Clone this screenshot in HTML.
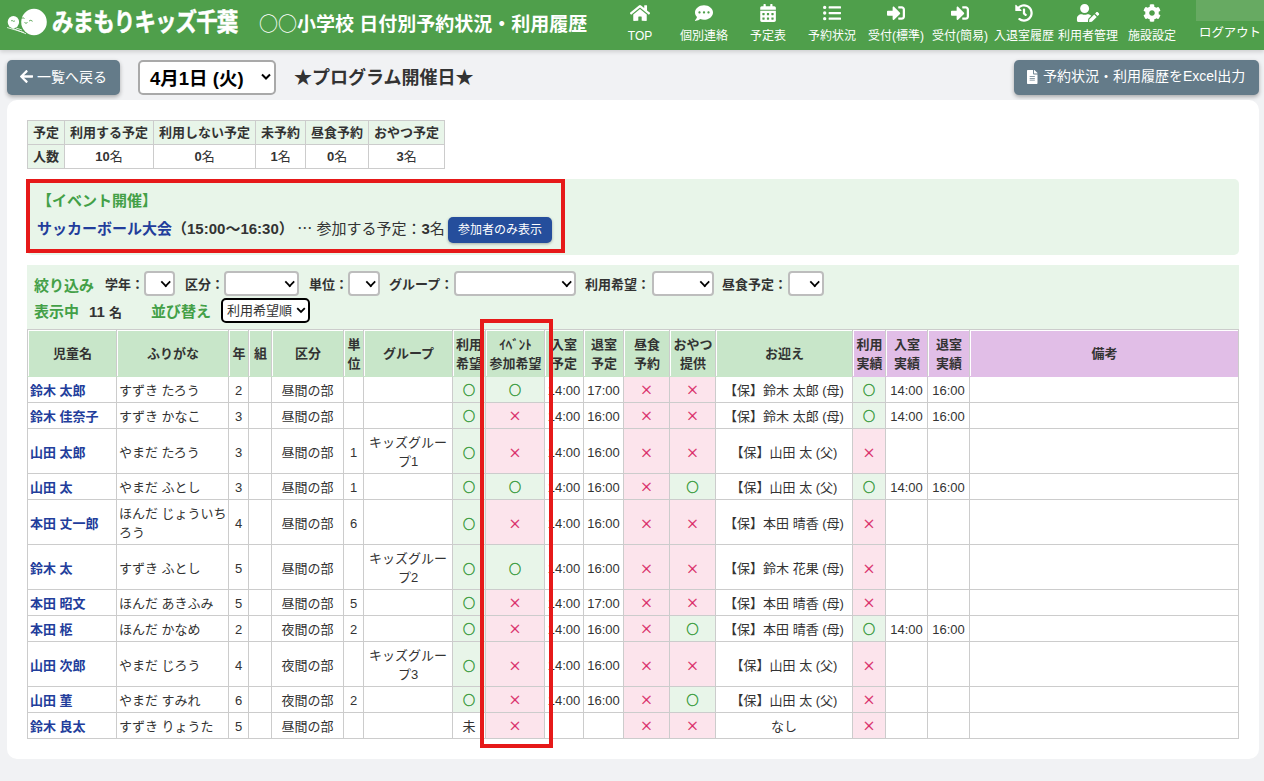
<!DOCTYPE html>
<html lang="ja">
<head>
<meta charset="utf-8">
<title>日付別予約状況・利用履歴</title>
<style>
*{box-sizing:border-box}
html,body{margin:0;padding:0}
body{width:1264px;height:781px;overflow:hidden;position:relative;background:#f1f2f4;color:#333;
  font-family:"Liberation Sans","Noto Sans CJK JP",sans-serif;font-size:13px;line-height:1.5}
a{text-decoration:none;color:inherit}
#hdr{position:absolute;left:0;top:0;width:1264px;height:50px;background:#4f9f4b;color:#fff;box-shadow:0 2px 4px rgba(0,0,0,.14)}
#logo{position:absolute;left:0;top:0}
#brand{position:absolute;left:52px;top:5px;font-size:21.5px;font-weight:700;line-height:36px;letter-spacing:-.9px;white-space:nowrap;-webkit-text-stroke:.4px #fff;transform:scaleY(1.18);transform-origin:50% 50%}
#ptitle{position:absolute;left:259px;top:8px;font-size:19px;font-weight:700;line-height:30px;white-space:nowrap}
#ptitle .thin{font-weight:400;font-family:"Noto Sans CJK JP","Liberation Sans",sans-serif}
.nv{position:absolute;top:0;width:80px;height:50px;text-align:center;color:#fff}
.nv svg{position:absolute;top:4px;left:50%;transform:translateX(-50%)}
.nv span{position:absolute;top:27px;left:-10px;right:-10px;font-size:12px;line-height:18px;white-space:nowrap}
#ubox{position:absolute;left:1196px;top:0;width:68px;height:21px;background:#67aa62}
#logout{position:absolute;left:1197px;width:66px;top:24px;text-align:center;font-size:12.4px;line-height:18px;white-space:nowrap}

#back{position:absolute;left:7px;top:60px;width:113px;height:35px;background:#647b89;color:#fff;border-radius:5px;box-shadow:0 2px 4px rgba(0,0,0,.3);font-size:14px;line-height:35px;white-space:nowrap}
#back svg{position:absolute;left:13px;top:9px}
#back span{position:absolute;left:30px;top:0}
#datesel{position:absolute;left:138px;top:60px;width:138px;height:35px;background:#fff;border:2px solid #a9a9a9;border-radius:5px;font-size:18.5px;font-weight:700;color:#000;line-height:31px;white-space:nowrap}
#datesel span{position:absolute;left:10px;top:1px}
#datesel svg{position:absolute;right:2px;top:11px}
#daytitle{position:absolute;left:294px;top:63px;font-size:18px;font-weight:700;line-height:30px;white-space:nowrap;color:#333}
#excel{position:absolute;left:1014px;top:60px;width:245px;height:35px;background:#647b89;color:#fff;border-radius:5px;box-shadow:0 2px 4px rgba(0,0,0,.3);font-size:14px;line-height:35px;white-space:nowrap}
#excel svg{position:absolute;left:13px;top:10px}
#excel span{position:absolute;left:29px;top:-1px}

#card{position:absolute;left:7px;top:100px;width:1252px;height:659px;background:#fff;border-radius:10px}

#sum{position:absolute;left:27px;top:120px;border-collapse:separate;border-spacing:0;border-right:1px solid #ccc;border-bottom:1px solid #ccc;font-size:13px}
#sum th,#sum td{border-left:1px solid #ccc;border-top:1px solid #ccc;height:24px;padding:0 5px;text-align:center;line-height:22px;white-space:nowrap}
#sum th{background:#e8f5e9;font-weight:700}
#sum td{background:#fff}

#evpanel{position:absolute;left:27px;top:179px;width:1212px;height:76px;background:#e8f5e9;border-radius:5px}
#evh{position:absolute;left:10px;top:11px;font-size:15px;font-weight:700;color:#43a047;line-height:22px;white-space:nowrap}
#evl{position:absolute;left:10px;top:38px;font-size:15px;line-height:22px;white-space:nowrap;color:#333}
#evl .evn{color:#223d9b;font-weight:700}
#evbtn{position:absolute;left:421px;top:38px;width:104px;height:26px;background:#254e9c;border-radius:5px;color:#fff;font-size:12px;line-height:27px;text-align:center;box-shadow:0 1px 3px rgba(0,0,0,.3)}

#fpanel{position:absolute;left:27px;top:265px;width:1212px;height:80px;background:#e8f5e9}
#frow1,#frow2{position:absolute;left:0;width:100%}
#frow1{top:7px;height:24px}
#frow2{top:33px;height:24px}
.gl{position:absolute;left:7px;top:2px;font-size:15px;font-weight:700;color:#43a047;line-height:24px;white-space:nowrap}
#frow1 label{position:absolute;top:1px;margin-left:-1px;font-size:13px;font-weight:700;line-height:24px;white-space:nowrap}
.sel{position:absolute;top:-1px;height:25px;background:#fff;border:2px solid #bdbdbd;border-radius:4px}
.sel:after{content:"";position:absolute;right:3.5px;top:4.5px;width:5.5px;height:5.5px;border-right:2px solid #000;border-bottom:2px solid #000;transform:rotate(45deg) scale(.9)}
#cnt{position:absolute;left:62px;top:2px;font-size:15px;font-weight:700;line-height:24px;white-space:nowrap}
#sortsel{position:absolute;left:194px;top:0;width:89px;height:25px;background:#fff;border:2px solid #000;border-radius:5px;font-size:13px;line-height:21px;white-space:nowrap}
#sortsel span{position:absolute;left:4px;top:0}
#sortsel svg{position:absolute;right:2px;top:7px}

#main{position:absolute;left:27px;top:329px;width:1212px;table-layout:fixed;border-collapse:separate;border-spacing:0;border-right:1px solid #ccc;border-bottom:1px solid #ccc;font-size:13px;line-height:19.5px}
#main th,#main td{border-left:1px solid #ccc;border-top:1px solid #ccc;padding:0 2px;text-align:center;vertical-align:middle;overflow:hidden}
#main th{height:47px;background:#c8e6c9;font-weight:700;box-shadow:inset 1px 1px 0 #fff;padding:2px 0 0 1px}
#main th.z{background:#e1bee7}
#main td{background:#fff;padding-top:2px}
#main td.t{padding-top:4px}
#main td.l{text-align:left;padding-left:2px;padding-right:0}
#main td.nm{color:#223d9b;font-weight:700}
#main td.g{background:#e8f5e9;color:#43a047}
#main td.p{background:#fce4ec;color:#d81b60}
#main tr.r1 td{border-top-color:#c8e6c9}
#main tr.r1 td.z{border-top-color:#e1bee7}
.sy{font-family:"Noto Sans CJK JP","Liberation Sans",sans-serif;font-weight:400}
#main td.g .sy{-webkit-text-stroke:.55px #43a047;font-size:12px}
#main td.p .sy{-webkit-text-stroke:.25px #d81b60;position:relative;top:-1px}
#main .clipa,#main .clipb{padding-left:0;padding-right:0;white-space:nowrap}

.redbox{position:absolute;border:4px solid #e61919;box-sizing:content-box}

.cj{font-family:"Noto Sans CJK JP","Liberation Sans",sans-serif}
#cnt i{font-style:normal;font-size:13px}

</style>
</head>
<body>
<div id="hdr">
  <svg id="logo" width="50" height="50" viewBox="0 0 50 50">
    <ellipse cx="34" cy="22" rx="12.8" ry="13.2" fill="#fff"/>
    <ellipse cx="13.4" cy="22.1" rx="5.7" ry="6.1" fill="#fff"/>
    <path d="M7 27.5 L24 32.5 M12 28 L26 33.8 M16 28 L22 30" stroke="#fff" stroke-width="0.8" fill="none"/>
    <path d="M21.5 18.5 q1.5 -1.5 3 0 M24.5 22.5 q1.5 1.6 3 0 M29 21 q1.8 -1.6 3.6 0.3" stroke="#4f9f4b" stroke-width="0.9" fill="none"/>
    <path d="M11 21 q1 -1.2 2 0 t2 -0.4" stroke="#4f9f4b" stroke-width="0.8" fill="none"/>
  </svg>
  <div id="brand">みまもりキッズ千葉</div>
  <div id="ptitle"><span class="thin">○○</span>小学校 日付別予約状況・利用履歴</div>
  <a class="nv" style="left:600px"><svg width="20.25" height="18" viewBox="0 0 576 512" fill="currentColor"><path d="M280.37 148.26L96 300.11V464a16 16 0 0 0 16 16l112.06-.29a16 16 0 0 0 15.92-16V368a16 16 0 0 1 16-16h64a16 16 0 0 1 16 16v95.64a16 16 0 0 0 16 16.05L464 480a16 16 0 0 0 16-16V300L295.67 148.26a12.19 12.19 0 0 0-15.3 0zM571.6 251.47L488 182.56V44.05a12 12 0 0 0-12-12h-56a12 12 0 0 0-12 12v72.61L318.47 43a48 48 0 0 0-61 0L4.34 251.47a12 12 0 0 0-1.6 16.9l25.5 31A12 12 0 0 0 45.15 301l235.22-193.74a12.19 12.19 0 0 1 15.3 0L530.9 301a12 12 0 0 0 16.9-1.6l25.5-31a12 12 0 0 0-1.7-16.93z"/></svg><span>TOP</span></a>
<a class="nv" style="left:664px"><svg width="18.0" height="18" viewBox="0 0 512 512" fill="currentColor"><path d="M256 32C114.6 32 0 125.1 0 240c0 49.6 21.4 95 57 130.7C44.5 421.1 2.7 466 2.2 466.5c-2.2 2.3-2.8 5.7-1.5 8.7S4.8 480 8 480c66.3 0 116-31.8 140.6-51.4 32.7 12.3 69 19.4 107.4 19.4 141.4 0 256-93.1 256-208S397.4 32 256 32zM128 272c-17.7 0-32-14.3-32-32s14.3-32 32-32 32 14.3 32 32-14.3 32-32 32zm128 0c-17.7 0-32-14.3-32-32s14.3-32 32-32 32 14.3 32 32-14.3 32-32 32zm128 0c-17.7 0-32-14.3-32-32s14.3-32 32-32 32 14.3 32 32-14.3 32-32 32z"/></svg><span>個別連絡</span></a>
<a class="nv" style="left:728px"><svg width="15.75" height="18" viewBox="0 0 448 512" fill="currentColor"><path d="M0 464c0 26.5 21.5 48 48 48h352c26.5 0 48-21.5 48-48V192H0v272zm320-196c0-6.6 5.4-12 12-12h40c6.6 0 12 5.4 12 12v40c0 6.6-5.4 12-12 12h-40c-6.6 0-12-5.4-12-12v-40zm0 128c0-6.6 5.4-12 12-12h40c6.6 0 12 5.4 12 12v40c0 6.6-5.4 12-12 12h-40c-6.6 0-12-5.4-12-12v-40zM192 268c0-6.6 5.4-12 12-12h40c6.6 0 12 5.4 12 12v40c0 6.6-5.4 12-12 12h-40c-6.6 0-12-5.4-12-12v-40zm0 128c0-6.6 5.4-12 12-12h40c6.6 0 12 5.4 12 12v40c0 6.6-5.4 12-12 12h-40c-6.6 0-12-5.4-12-12v-40zM64 268c0-6.6 5.4-12 12-12h40c6.6 0 12 5.4 12 12v40c0 6.6-5.4 12-12 12H76c-6.6 0-12-5.4-12-12v-40zm0 128c0-6.6 5.4-12 12-12h40c6.6 0 12 5.4 12 12v40c0 6.6-5.4 12-12 12H76c-6.6 0-12-5.4-12-12v-40zM400 64h-48V16c0-8.8-7.2-16-16-16h-32c-8.8 0-16 7.2-16 16v48H160V16c0-8.800-7.2-16-16-16h-32c-8.8 0-16 7.2-16 16v48H48C21.5 64 0 85.5 0 112v48h448v-48c0-26.5-21.5-48-48-48z"/></svg><span>予定表</span></a>
<a class="nv" style="left:792px"><svg width="18.0" height="18" viewBox="0 0 512 512" fill="currentColor"><path d="M48 48a48 48 0 1 0 48 48 48 48 0 0 0-48-48zm0 160a48 48 0 1 0 48 48 48 48 0 0 0-48-48zm0 160a48 48 0 1 0 48 48 48 48 0 0 0-48-48zm448 16H176a16 16 0 0 0-16 16v32a16 16 0 0 0 16 16h320a16 16 0 0 0 16-16v-32a16 16 0 0 0-16-16zm0-320H176a16 16 0 0 0-16 16v32a16 16 0 0 0 16 16h320a16 16 0 0 0 16-16V80a16 16 0 0 0-16-16zm0 160H176a16 16 0 0 0-16 16v32a16 16 0 0 0 16 16h320a16 16 0 0 0 16-16v-32a16 16 0 0 0-16-16z"/></svg><span>予約状況</span></a>
<a class="nv" style="left:856px"><svg width="18.0" height="18" viewBox="0 0 512 512" fill="currentColor"><path d="M416 448h-84c-6.6 0-12-5.4-12-12v-40c0-6.6 5.4-12 12-12h84c17.7 0 32-14.3 32-32V160c0-17.7-14.3-32-32-32h-84c-6.6 0-12-5.4-12-12V76c0-6.6 5.4-12 12-12h84c53 0 96 43 96 96v192c0 53-43 96-96 96zm-47-201L201 79c-15-15-41-4.5-41 17v96H24c-13.3 0-24 10.7-24 24v96c0 13.3 10.7 24 24 24h136v96c0 21.5 26 32 41 17l168-168c9.3-9.4 9.3-24.6 0-34z"/></svg><span>受付(標準)</span></a>
<a class="nv" style="left:920px"><svg width="18.0" height="18" viewBox="0 0 512 512" fill="currentColor"><path d="M416 448h-84c-6.6 0-12-5.4-12-12v-40c0-6.6 5.4-12 12-12h84c17.7 0 32-14.3 32-32V160c0-17.7-14.3-32-32-32h-84c-6.6 0-12-5.4-12-12V76c0-6.6 5.4-12 12-12h84c53 0 96 43 96 96v192c0 53-43 96-96 96zm-47-201L201 79c-15-15-41-4.5-41 17v96H24c-13.3 0-24 10.7-24 24v96c0 13.3 10.7 24 24 24h136v96c0 21.5 26 32 41 17l168-168c9.3-9.4 9.3-24.6 0-34z"/></svg><span>受付(簡易)</span></a>
<a class="nv" style="left:984px"><svg width="18.0" height="18" viewBox="0 0 512 512" fill="currentColor"><path d="M504 255.531c.253 136.64-111.18 248.372-247.82 248.468-59.015.042-113.223-20.53-155.822-54.911-11.077-8.94-11.905-25.541-1.839-35.607l11.267-11.267c8.609-8.609 22.353-9.551 31.891-1.984C173.062 425.135 212.781 440 256 440c101.705 0 184-82.311 184-184 0-101.705-82.311-184-184-184-48.814 0-93.149 18.969-126.068 49.932l50.754 50.754c10.08 10.08 2.941 27.314-11.313 27.314H24c-8.837 0-16-7.163-16-16V38.627c0-14.254 17.234-21.393 27.314-11.314l49.372 49.372C129.209 34.136 189.552 8 256 8c136.81 0 247.747 110.78 248 247.531zm-180.912 78.784l9.823-12.63c8.138-10.463 6.253-25.542-4.21-33.679L288 256.349V152c0-13.255-10.745-24-24-24h-16c-13.255 0-24 10.745-24 24v135.651l65.409 50.874c10.463 8.137 25.541 6.253 33.679-4.21z"/></svg><span>入退室履歴</span></a>
<a class="nv" style="left:1048px"><svg width="22.5" height="18" viewBox="0 0 640 512" fill="currentColor"><path d="M224 256c70.7 0 128-57.3 128-128S294.7 0 224 0 96 57.3 96 128s57.3 128 128 128zm89.6 32h-16.7c-22.2 10.2-46.9 16-72.9 16s-50.6-5.8-72.9-16h-16.7C60.2 288 0 348.2 0 422.4V464c0 26.5 21.5 48 48 48h274.9c-2.4-6.8-3.4-14-2.6-21.3l6.8-60.9 1.2-11.1 7.9-7.9 77.3-77.3c-24.5-27.7-60-45.5-99.9-45.5zm45.3 145.3l-6.8 61c-1.1 10.2 7.5 18.8 17.6 17.600l60.9-6.8 137.9-137.9-71.700-71.700-137.900 137.800zM633 268.9L595.100 231c-9.300-9.300-24.500-9.300-33.800 0l-37.800 37.800-4.100 4.100 71.800 71.700 41.800-41.800c9.300-9.400 9.300-24.500 0-33.900z"/></svg><span>利用者管理</span></a>
<a class="nv" style="left:1112px"><svg width="18.0" height="18" viewBox="0 0 512 512" fill="currentColor"><path d="M487.4 315.7l-42.6-24.6c4.300-23.200 4.300-47 0-70.200l42.600-24.600c4.900-2.800 7.100-8.600 5.500-14-11.100-35.600-30-67.800-54.700-94.600-3.800-4.100-10-5.100-14.800-2.300L380.800 110c-17.900-15.400-38.500-27.300-60.800-35.100V25.800c0-5.600-3.900-10.500-9.400-11.700-36.700-8.200-74.300-7.800-109.200 0-5.500 1.200-9.400 6.100-9.400 11.700V75c-22.200 7.900-42.800 19.800-60.800 35.100L88.700 85.500c-4.900-2.800-11-1.900-14.800 2.300-24.700 26.700-43.600 58.900-54.700 94.600-1.700 5.400.6 11.200 5.500 14L67.300 221c-4.300 23.200-4.300 47 0 70.200l-42.600 24.600c-4.900 2.800-7.100 8.600-5.500 14 11.100 35.600 30 67.800 54.700 94.600 3.800 4.100 10 5.100 14.800 2.300l42.600-24.600c17.900 15.400 38.500 27.300 60.800 35.100v49.200c0 5.600 3.900 10.500 9.400 11.700 36.700 8.200 74.300 7.800 109.200 0 5.500-1.200 9.400-6.100 9.400-11.700v-49.200c22.200-7.900 42.800-19.800 60.800-35.100l42.600 24.600c4.900 2.800 11 1.900 14.800-2.300 24.700-26.700 43.600-58.900 54.700-94.600 1.500-5.500-.7-11.300-5.600-14.100zM256 336c-44.100 0-80-35.900-80-80s35.900-80 80-80 80 35.900 80 80-35.900 80-80 80z"/></svg><span>施設設定</span></a>

  <div id="ubox"></div>
  <div id="logout">ログアウト</div>
</div>

<a id="back"><svg width="13.12" height="15" viewBox="0 0 448 512" fill="currentColor"><path d="M257.5 445.1l-22.200 22.200c-9.400 9.400-24.600 9.400-33.900 0L7 273c-9.400-9.400-9.400-24.600 0-33.900L201.400 44.700c9.400-9.400 24.600-9.400 33.900 0l22.200 22.200c9.500 9.500 9.300 25-.4 34.300L136.600 216H424c13.300 0 24 10.700 24 24v32c0 13.300-10.700 24-24 24H136.600l120.500 114.800c9.800 9.300 10 24.800.4 34.300z"/></svg><span>一覧へ戻る</span></a>
<div id="datesel"><span>4月1日 (火)</span><svg width="12" height="8" viewBox="0 0 12 8"><path d="M2 1.5 L6 5.5 L10 1.5" stroke="#000" stroke-width="2" fill="none"/></svg></div>
<div id="daytitle">★プログラム開催日★</div>
<a id="excel"><svg width="10.5" height="14" viewBox="0 0 384 512" fill="currentColor"><path d="M224 136V0H24C10.7 0 0 10.7 0 24v464c0 13.3 10.7 24 24 24h336c13.3 0 24-10.7 24-24V160H248c-13.2 0-24-10.8-24-24zm64 236c0 6.6-5.4 12-12 12H108c-6.6 0-12-5.4-12-12v-8c0-6.6 5.4-12 12-12h168c6.6 0 12 5.4 12 12v8zm0-64c0 6.6-5.4 12-12 12H108c-6.6 0-12-5.4-12-12v-8c0-6.6 5.4-12 12-12h168c6.6 0 12 5.4 12 12v8zm0-72v8c0 6.6-5.4 12-12 12H108c-6.6 0-12-5.4-12-12v-8c0-6.6 5.4-12 12-12h168c6.6 0 12 5.4 12 12zm96-114.100v6.100H256V0h6.100c6.400 0 12.500 2.500 17 7l97.900 98c4.500 4.500 7 10.600 7 16.900z"/></svg><span>予約状況・利用履歴をExcel出力</span></a>

<div id="card"></div>

<table id="sum">
<tr><th>予定</th><th>利用する予定</th><th>利用しない予定</th><th>未予約</th><th>昼食予約</th><th>おやつ予定</th></tr>
<tr><th>人数</th><td><b>10</b>名</td><td><b>0</b>名</td><td><b>1</b>名</td><td><b>0</b>名</td><td><b>3</b>名</td></tr>
</table>

<div id="evpanel">
  <div id="evh">【イベント開催】</div>
  <div id="evl"><span class="evn">サッカーボール大会</span><b>（15:00～16:30）</b><span class="cj" style="margin-left:3.5px">…</span> 参加する予定：<b>3</b>名</div>
  <a id="evbtn">参加者のみ表示</a>
</div>

<div id="fpanel">
  <div id="frow1">
    <span class="gl">絞り込み</span>
    <label style="left:79px">学年：</label><span class="sel" style="left:117px;width:31px"></span>
    <label style="left:159px">区分：</label><span class="sel" style="left:197px;width:75px"></span>
    <label style="left:283px">単位：</label><span class="sel" style="left:321px;width:32px"></span>
    <label style="left:363px">グループ：</label><span class="sel" style="left:427px;width:122px"></span>
    <label style="left:559px">利用希望：</label><span class="sel" style="left:625px;width:62px"></span>
    <label style="left:696px">昼食予定：</label><span class="sel" style="left:761px;width:36px"></span>
  </div>
  <div id="frow2">
    <span class="gl">表示中</span><span id="cnt">11 <i>名</i></span><span class="gl" style="left:124px">並び替え</span>
    <span id="sortsel"><span>利用希望順</span><svg width="10" height="7" viewBox="0 0 10 7"><path d="M1.2 1.2 L5 5 L8.800 1.2" stroke="#000" stroke-width="1.8" fill="none"/></svg></span>
  </div>
</div>

<table id="main">
<colgroup><col style="width:89px"><col style="width:112px"><col style="width:20px"><col style="width:23px"><col style="width:72px"><col style="width:20px"><col style="width:89px"><col style="width:33px"><col style="width:59px"><col style="width:39px"><col style="width:40px"><col style="width:46px"><col style="width:46px"><col style="width:137px"><col style="width:33px"><col style="width:42px"><col style="width:42px"><col style="width:269px"></colgroup>
<thead><tr>
<th>児童名</th><th>ふりがな</th><th>年</th><th>組</th><th>区分</th><th>単<br>位</th><th>グループ</th>
<th class="clipa">利用<br>希望</th><th class="ev"><span class="hk">ｲﾍﾞﾝﾄ</span><br>参加希望</th><th class="clipb">入室<br>予定</th><th>退室<br>予定</th>
<th>昼食<br>予約</th><th>おやつ<br>提供</th><th>お迎え</th><th class="z">利用<br>実績</th><th class="z">入室<br>実績</th><th class="z">退室<br>実績</th><th class="z">備考</th>
</tr></thead>
<tbody>
<tr class="r1" style="height:26px"><td class="l nm">鈴木 太郎</td><td class="l">すずき たろう</td><td class="c">2</td><td></td><td class="c">昼間の部</td><td class="c"></td><td class="c"></td><td class="g"><span class="sy">○</span></td><td class="g"><span class="sy">○</span></td><td class="c">14:00</td><td class="c">17:00</td><td class="p"><span class="sy">×</span></td><td class="p"><span class="sy">×</span></td><td class="c">【保】鈴木 太郎 (母)</td><td class="g z"><span class="sy">○</span></td><td class="z">14:00</td><td class="z">16:00</td><td class="z"></td></tr>
<tr style="height:26px"><td class="l nm">鈴木 佳奈子</td><td class="l">すずき かなこ</td><td class="c">3</td><td></td><td class="c">昼間の部</td><td class="c"></td><td class="c"></td><td class="g"><span class="sy">○</span></td><td class="p"><span class="sy">×</span></td><td class="c">14:00</td><td class="c">16:00</td><td class="p"><span class="sy">×</span></td><td class="p"><span class="sy">×</span></td><td class="c">【保】鈴木 太郎 (母)</td><td class="g z"><span class="sy">○</span></td><td class="z">14:00</td><td class="z">16:00</td><td class="z"></td></tr>
<tr style="height:45px"><td class="l nm t">山田 太郎</td><td class="l t">やまだ たろう</td><td class="c t">3</td><td></td><td class="c t">昼間の部</td><td class="c t">1</td><td class="c">キッズグループ1</td><td class="g t"><span class="sy">○</span></td><td class="p t"><span class="sy">×</span></td><td class="c t">14:00</td><td class="c t">16:00</td><td class="p t"><span class="sy">×</span></td><td class="p t"><span class="sy">×</span></td><td class="c t">【保】山田 太 (父)</td><td class="p z t"><span class="sy">×</span></td><td class="z t"></td><td class="z t"></td><td class="z"></td></tr>
<tr style="height:26px"><td class="l nm">山田 太</td><td class="l">やまだ ふとし</td><td class="c">3</td><td></td><td class="c">昼間の部</td><td class="c">1</td><td class="c"></td><td class="g"><span class="sy">○</span></td><td class="g"><span class="sy">○</span></td><td class="c">14:00</td><td class="c">16:00</td><td class="p"><span class="sy">×</span></td><td class="g"><span class="sy">○</span></td><td class="c">【保】山田 太 (父)</td><td class="g z"><span class="sy">○</span></td><td class="z">14:00</td><td class="z">16:00</td><td class="z"></td></tr>
<tr style="height:45px"><td class="l nm t">本田 丈一郎</td><td class="l">ほんだ じょういちろう</td><td class="c t">4</td><td></td><td class="c t">昼間の部</td><td class="c t">6</td><td class="c t"></td><td class="g t"><span class="sy">○</span></td><td class="p t"><span class="sy">×</span></td><td class="c t">14:00</td><td class="c t">16:00</td><td class="p t"><span class="sy">×</span></td><td class="p t"><span class="sy">×</span></td><td class="c t">【保】本田 晴香 (母)</td><td class="p z t"><span class="sy">×</span></td><td class="z t"></td><td class="z t"></td><td class="z"></td></tr>
<tr style="height:45px"><td class="l nm t">鈴木 太</td><td class="l t">すずき ふとし</td><td class="c t">5</td><td></td><td class="c t">昼間の部</td><td class="c t"></td><td class="c">キッズグループ2</td><td class="g t"><span class="sy">○</span></td><td class="g t"><span class="sy">○</span></td><td class="c t">14:00</td><td class="c t">16:00</td><td class="p t"><span class="sy">×</span></td><td class="p t"><span class="sy">×</span></td><td class="c t">【保】鈴木 花果 (母)</td><td class="p z t"><span class="sy">×</span></td><td class="z t"></td><td class="z t"></td><td class="z"></td></tr>
<tr style="height:26px"><td class="l nm">本田 昭文</td><td class="l">ほんだ あきふみ</td><td class="c">5</td><td></td><td class="c">昼間の部</td><td class="c">5</td><td class="c"></td><td class="g"><span class="sy">○</span></td><td class="p"><span class="sy">×</span></td><td class="c">14:00</td><td class="c">17:00</td><td class="p"><span class="sy">×</span></td><td class="p"><span class="sy">×</span></td><td class="c">【保】本田 晴香 (母)</td><td class="p z"><span class="sy">×</span></td><td class="z"></td><td class="z"></td><td class="z"></td></tr>
<tr style="height:26px"><td class="l nm">本田 枢</td><td class="l">ほんだ かなめ</td><td class="c">2</td><td></td><td class="c">夜間の部</td><td class="c">2</td><td class="c"></td><td class="g"><span class="sy">○</span></td><td class="p"><span class="sy">×</span></td><td class="c">14:00</td><td class="c">16:00</td><td class="p"><span class="sy">×</span></td><td class="g"><span class="sy">○</span></td><td class="c">【保】本田 晴香 (母)</td><td class="g z"><span class="sy">○</span></td><td class="z">14:00</td><td class="z">16:00</td><td class="z"></td></tr>
<tr style="height:45px"><td class="l nm t">山田 次郎</td><td class="l t">やまだ じろう</td><td class="c t">4</td><td></td><td class="c t">夜間の部</td><td class="c t"></td><td class="c">キッズグループ3</td><td class="g t"><span class="sy">○</span></td><td class="p t"><span class="sy">×</span></td><td class="c t">14:00</td><td class="c t">16:00</td><td class="p t"><span class="sy">×</span></td><td class="p t"><span class="sy">×</span></td><td class="c t">【保】山田 太 (父)</td><td class="p z t"><span class="sy">×</span></td><td class="z t"></td><td class="z t"></td><td class="z"></td></tr>
<tr style="height:26px"><td class="l nm">山田 菫</td><td class="l">やまだ すみれ</td><td class="c">6</td><td></td><td class="c">夜間の部</td><td class="c">2</td><td class="c"></td><td class="g"><span class="sy">○</span></td><td class="p"><span class="sy">×</span></td><td class="c">14:00</td><td class="c">16:00</td><td class="p"><span class="sy">×</span></td><td class="g"><span class="sy">○</span></td><td class="c">【保】山田 太 (父)</td><td class="p z"><span class="sy">×</span></td><td class="z"></td><td class="z"></td><td class="z"></td></tr>
<tr style="height:26px"><td class="l nm">鈴木 良太</td><td class="l">すずき りょうた</td><td class="c">5</td><td></td><td class="c">昼間の部</td><td class="c"></td><td class="c"></td><td>未</td><td class="p"><span class="sy">×</span></td><td class="c"></td><td class="c"></td><td class="p"><span class="sy">×</span></td><td class="p"><span class="sy">×</span></td><td class="c">なし</td><td class="p z"><span class="sy">×</span></td><td class="z"></td><td class="z"></td><td class="z"></td></tr>
</tbody>
</table>

<div class="redbox" style="left:26px;top:179px;width:531px;height:66px"></div>
<div class="redbox" style="left:480px;top:319px;width:65px;height:421px"></div>
</body>
</html>
